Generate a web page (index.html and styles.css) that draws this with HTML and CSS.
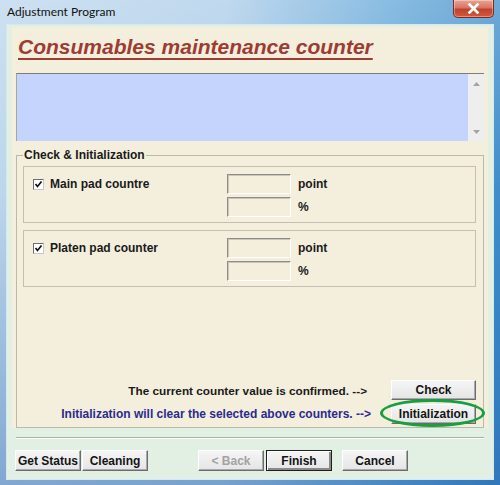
FILE: index.html
```html
<!DOCTYPE html>
<html lang="en">
<head>
    <meta charset="UTF-8">
    <meta name="viewport" content="width=device-width, initial-scale=1.0">
    <title>Adjustment Program</title>
    <link rel="stylesheet" href="styles.css">
</head>
<body>
    <div class="window">
        <div class="titlebar">
            <span class="title">Adjustment Program</span>
            <button class="close-btn" aria-label="Close">
                <svg width="13" height="11" viewBox="0 0 13 11">
                    <path d="M2.5 1.5 L10.5 9.5 M10.5 1.5 L2.5 9.5" stroke="#fff" stroke-width="2.6" stroke-linecap="square"/>
                </svg>
            </button>
        </div>

        <div class="client">
            <div class="panel">
                <h1 class="heading">Consumables maintenance counter</h1>

                <div class="info-box">
                    <div class="scrollbar">
                        <svg width="7" height="4" viewBox="0 0 7 4"><path d="M0 4 L3.5 0 L7 4 Z" fill="#a3a3a3"/></svg>
                        <svg width="7" height="4" viewBox="0 0 7 4"><path d="M0 0 L3.5 4 L7 0 Z" fill="#a3a3a3"/></svg>
                    </div>
                </div>

                <fieldset class="group">
                    <legend>Check &amp; Initialization</legend>

                    <div class="counter">
                        <label class="check">
                            <span class="box">
                                <svg width="9" height="9" viewBox="0 0 9 9"><path d="M1.5 4 L3.5 6.5 L7.5 1.5" stroke="#111" stroke-width="1.7" fill="none"/></svg>
                            </span>
                            Main pad countre
                        </label>
                        <div class="fields">
                            <div class="field"><span class="input"></span><span class="unit">point</span></div>
                            <div class="field"><span class="input"></span><span class="unit">%</span></div>
                        </div>
                    </div>

                    <div class="counter">
                        <label class="check">
                            <span class="box">
                                <svg width="9" height="9" viewBox="0 0 9 9"><path d="M1.5 4 L3.5 6.5 L7.5 1.5" stroke="#111" stroke-width="1.7" fill="none"/></svg>
                            </span>
                            Platen pad counter
                        </label>
                        <div class="fields">
                            <div class="field"><span class="input"></span><span class="unit">point</span></div>
                            <div class="field"><span class="input"></span><span class="unit">%</span></div>
                        </div>
                    </div>

                    <div class="actions">
                        <div class="action-row">
                            <span class="note">The current counter value is confirmed. --&gt;</span>
                            <button class="btn wide">Check</button>
                        </div>
                        <div class="action-row">
                            <span class="note blue">Initialization will clear the selected above counters. --&gt;</span>
                            <span class="btn-wrap">
                                <button class="btn wide">Initialization</button>
                                <span class="ring"></span>
                            </span>
                        </div>
                    </div>
                </fieldset>
            </div>

            <div class="separator"></div>

            <div class="button-bar">
                <button class="btn">Get Status</button>
                <button class="btn cleaning">Cleaning</button>
                <button class="btn back" disabled>&lt; Back</button>
                <button class="btn finish">Finish</button>
                <button class="btn cancel">Cancel</button>
            </div>
        </div>
    </div>
</body>
</html>
```

FILE: styles.css
```css
* {
    box-sizing: border-box;
}

html, body {
    margin: 0;
}

body {
    width: 500px;
    height: 485px;
    overflow: hidden;
    font-family: "Liberation Sans", Arial, sans-serif;
    font-size: 12px;
    color: #1a1a1a;
}

/* Window frame */
.window {
    height: 485px;
    display: flex;
    flex-direction: column;
    padding: 0 6px 5px;
    background:
        linear-gradient(180deg, rgba(255, 255, 255, 0.25) 0%, rgba(255, 255, 255, 0) 40%, rgba(20, 80, 160, 0.35) 100%),
        linear-gradient(90deg, #bcd6ec 0%, #abcce8 45%, #5ea4d7 80%, #3e8cc9 100%);
}

.titlebar {
    height: 24px;
    display: flex;
    justify-content: space-between;
    align-items: flex-start;
}

.title {
    font-family: "Lato", "Liberation Sans", sans-serif;
    font-size: 12px;
    line-height: 24px;
    padding-left: 1px;
    color: #111;
}

.close-btn {
    width: 41px;
    height: 18px;
    padding: 0;
    display: flex;
    justify-content: center;
    align-items: center;
    border: 1px solid #7a2b22;
    border-top: none;
    border-radius: 0 0 5px 5px;
    background: linear-gradient(180deg, #e9a595 0%, #d87562 45%, #c2412b 55%, #d2583d 100%);
    box-shadow: inset 0 0 0 1px rgba(255, 255, 255, 0.35);
}

.client {
    flex: 1;
    display: flex;
    flex-direction: column;
    background: #e2efe3;
    border: 1px solid #d6e7ef;
}

/* Cream page */
.panel {
    flex: 1;
    display: flex;
    flex-direction: column;
    margin: 2px 5px 0;
    padding: 0 4px;
    background: #f4eedd;
}

.heading {
    margin: 8px 0 0 2px;
    font-size: 21px;
    line-height: 24px;
    font-weight: bold;
    font-style: italic;
    color: #9d3c34;
    text-decoration: underline;
    text-decoration-thickness: 2px;
    text-underline-offset: 4px;
}

.info-box {
    height: 68px;
    margin-top: 14px;
    display: flex;
    justify-content: flex-end;
    background: #c4d4fd;
    border-top: 1px solid #7d7d7d;
    border-left: 1px solid #a5a5a5;
}

.scrollbar {
    width: 16px;
    display: flex;
    flex-direction: column;
    justify-content: space-between;
    align-items: center;
    padding: 8px 0 7px;
    background: #eeeeee;
}

/* Check & Initialization group */
.group {
    flex: 1;
    display: flex;
    flex-direction: column;
    margin: 7px 0 0;
    padding: 4px 7px 3px 6px;
    border: 1px solid #bcb8aa;
    min-width: 0;
}

.group legend {
    padding: 0 1px;
    font-weight: bold;
    line-height: 14px;
}

.counter {
    display: flex;
    padding: 7px 0 5px 9px;
    border: 1px solid #c3bfb2;
}

.counter + .counter {
    margin-top: 7px;
}

.check {
    width: 194px;
    height: 20px;
    display: flex;
    align-items: center;
    gap: 6px;
    font-weight: bold;
}

.box {
    width: 11px;
    height: 11px;
    display: flex;
    justify-content: center;
    align-items: center;
    background: #fff;
    border: 1px solid;
    border-color: #6e6e6e #c9c9c9 #c9c9c9 #6e6e6e;
}

.fields {
    display: flex;
    flex-direction: column;
    gap: 3px;
}

.field {
    display: flex;
    align-items: center;
    gap: 7px;
    font-weight: bold;
}

.input {
    width: 64px;
    height: 20px;
    border: 1px solid;
    border-color: #8e8c86 #ffffff #ffffff #8e8c86;
    box-shadow: inset 1px 1px 0 #c8c5b9;
}

.actions {
    margin-top: auto;
    display: flex;
    flex-direction: column;
    gap: 4px;
}

.action-row {
    display: flex;
    justify-content: flex-end;
    align-items: center;
}

.note {
    font-size: 11.75px;
    font-weight: bold;
    margin-right: 24px;
}

.note.blue {
    font-size: 12px;
    color: #2b2b8e;
    margin-right: 20px;
}

.btn-wrap {
    position: relative;
    display: flex;
}

.ring {
    position: absolute;
    left: -11px;
    right: -9px;
    top: -5px;
    bottom: -3px;
    border: 3.5px solid #16a040;
    border-radius: 50%;
}

/* Buttons */
.btn {
    width: 66px;
    height: 21px;
    padding: 0;
    font-family: "Liberation Sans", Arial, sans-serif;
    font-size: 12px;
    font-weight: bold;
    color: #141414;
    background: linear-gradient(180deg, #f5f5f5 0%, #e5e5e5 100%);
    border: 1px solid;
    border-color: #ffffff #6c6c6c #6c6c6c #ffffff;
    box-shadow: inset -1px -1px 0 #a9a9a9;
}

.btn.wide {
    width: 85px;
    height: 20px;
}

.btn.back {
    color: #a2a2a2;
    margin-left: 50px;
}

.btn.finish {
    margin-left: 2px;
    border-color: #1e1e1e;
    box-shadow: inset 1px 1px 0 #ffffff, inset -2px -2px 0 #8a8a8a;
}

.btn.cleaning {
    margin-left: 1px;
}

.btn.cancel {
    margin-left: 10px;
}

.separator {
    height: 2px;
    margin: 9px 9px 0;
    border-top: 1px solid #a9b2a9;
    border-bottom: 1px solid #ffffff;
}

.button-bar {
    display: flex;
    margin: 11px 0 8px;
    padding-left: 8px;
}
```
